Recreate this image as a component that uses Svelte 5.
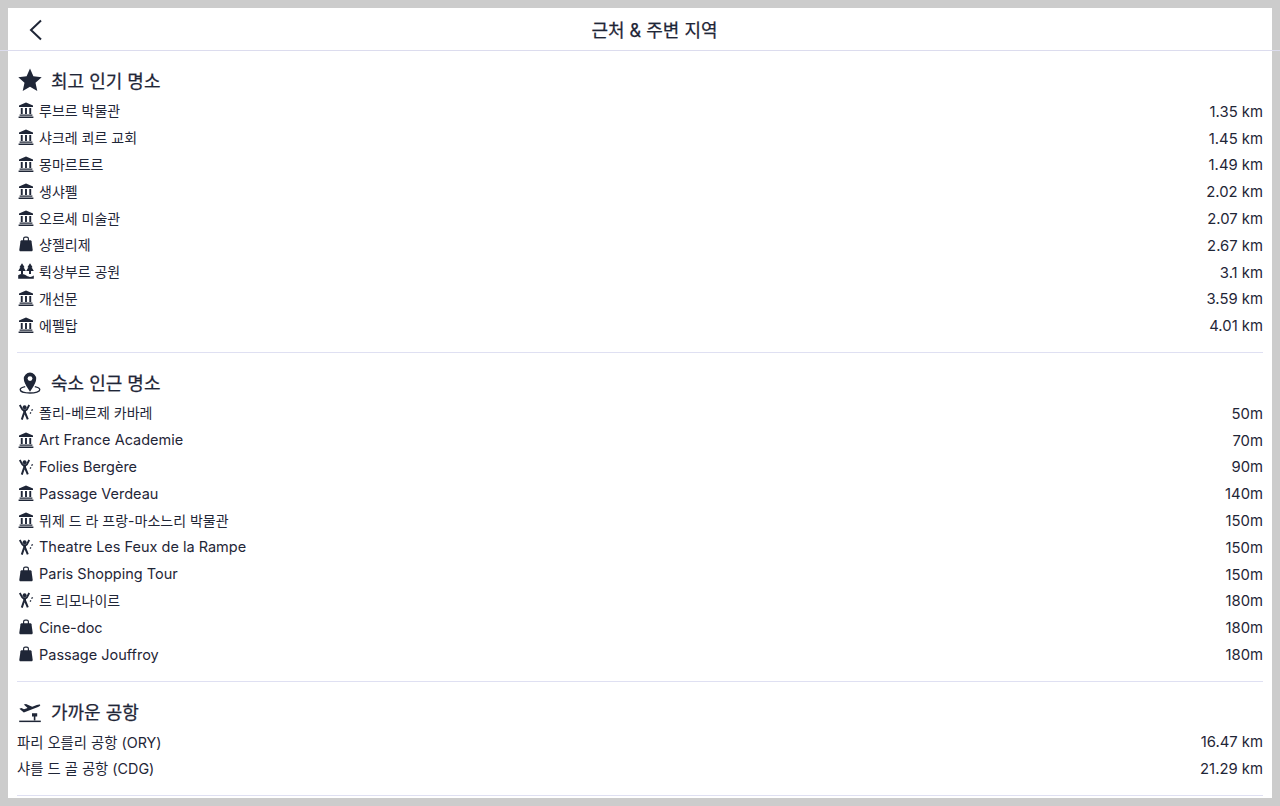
<script>
  const sections = [
    {
      title: "최고 인기 명소",
      icon: "star",
      rows: [
        ["museum", "루브르 박물관", "1.35 km"],
        ["museum", "샤크레 쾨르 교회", "1.45 km"],
        ["museum", "몽마르트르", "1.49 km"],
        ["museum", "생샤펠", "2.02 km"],
        ["museum", "오르세 미술관", "2.07 km"],
        ["bag", "샹젤리제", "2.67 km"],
        ["park", "뤽상부르 공원", "3.1 km"],
        ["museum", "개선문", "3.59 km"],
        ["museum", "에펠탑", "4.01 km"],
      ],
    },
    {
      title: "숙소 인근 명소",
      icon: "pin",
      rows: [
        ["dance", "폴리-베르제 카바레", "50m"],
        ["museum", "Art France Academie", "70m"],
        ["dance", "Folies Bergère", "90m"],
        ["museum", "Passage Verdeau", "140m"],
        ["museum", "뮈제 드 라 프랑-마소느리 박물관", "150m"],
        ["dance", "Theatre Les Feux de la Rampe", "150m"],
        ["bag", "Paris Shopping Tour", "150m"],
        ["dance", "르 리모나이르", "180m"],
        ["bag", "Cine-doc", "180m"],
        ["bag", "Passage Jouffroy", "180m"],
      ],
    },
    {
      title: "가까운 공항",
      icon: "plane",
      rows: [
        [null, "파리 오를리 공항 (ORY)", "16.47 km"],
        [null, "샤를 드 골 공항 (CDG)", "21.29 km"],
      ],
    },
  ];

  // hangul glyphs run a little narrower than the latin ones in the original
  const isKorean = (text) => /[\uac00-\ud7a3]/.test(text);
  const isMixed = (text) => isKorean(text) && /[A-Z]{3}/.test(text);
</script>

{#snippet icon(name)}
  {#if name === "museum"}
    <svg class="small" viewBox="0 0 16 16" fill="#1f2637">
      <path d="M8 .4 15 3.600V5H1V3.600z" />
      <path d="M2.800 6h1.900v6H2.800zM7.050 6h1.900v6h-1.900zM11.300 6h1.900v6h-1.900z" />
      <path d="M1.600 12.600h12.800v1.200H1.600zM.6 14.500h14.800V16H.6z" />
    </svg>
  {:else if name === "bag"}
    <svg class="small" viewBox="0 0 16 16" fill="#1f2637">
      <path d="M5 5V2.800A2.200 2.200 0 0 1 7.200.6h1.600A2.200 2.200 0 0 1 11 2.800V5H9.800V2.800a1 1 0 0 0-1-1H7.200a1 1 0 0 0-1 1V5z" />
      <path d="M3.600 4.200h8.800c.6 0 1 .4 1.100 1l1.200 8.600c.1.900-.4 1.500-1.200 1.500H2.500c-.8 0-1.300-.6-1.200-1.500l1.200-8.600c.1-.6.500-1 1.100-1z" />
    </svg>
  {:else if name === "park"}
    <svg class="small" viewBox="0 0 16 16" fill="#1f2637">
      <path d="M4 .2 6.600 4.200H5.600L7.800 8H5v3H3V8H.2l2.200-3.800h-1zM12 .2l2.600 4h-1L15.800 8H13v3h-2V8H8.200l2.200-3.800h-1z" />
      <path d="M.2 15.800v-3.600c2.400-1.500 4.700-1.500 6.800-.4 1.800 1 3 2 4.800 2.100 1.500.1 2.900-.4 4-1.300v3.200z" />
    </svg>
  {:else if name === "dance"}
    <svg class="small" viewBox="0 0 16 16" fill="none" stroke="#1f2637">
      <circle cx="6.600" cy="3.200" r="2" fill="#1f2637" stroke="none" />
      <path stroke-width="1.900" d="M1.800 1 4.400 5.600c.3.500.7.700 1.200.7h2c.5 0 .9-.2 1.200-.7l2.400-4.600" />
      <path stroke-width="2.800" d="M6.600 6.400v3" />
      <path stroke-width="2" d="M6 9 3.800 15.600M7.200 9l2.600 6.400" />
      <path stroke-width="1.300" d="M14.800 5.400l-1.400 1.100M12.900 8.300l-.8 1.300" />
    </svg>
  {:else if name === "star"}
    <svg class="big" viewBox="0 0 24 24" fill="#1f2637">
      <path d="M12 .6l3.400 7.700 8.300.9-6.200 5.600 1.800 8.200L12 18.800 4.700 23l1.800-8.200L.3 9.200l8.300-.9z" />
    </svg>
  {:else if name === "pin"}
    <svg class="big" viewBox="0 0 24 24" fill="none" stroke="#1f2637">
      <path stroke-width="1.600" d="M12 20.200C9.200 16 6.600 12.800 6.600 8.800a5.400 5.400 0 0 1 10.800 0c0 4-2.600 7.200-5.400 11.400z" fill="#1f2637" />
      <circle cx="12" cy="8.600" r="2.400" fill="#fff" stroke="none" />
      <path stroke-width="1.300" d="M7.200 16.600C4 17.200 2.200 18.400 2.200 19.800c0 1.800 4.400 3.200 9.800 3.200s9.800-1.400 9.800-3.200c0-1.400-1.800-2.600-5-3.200" />
    </svg>
  {:else if name === "plane"}
    <svg class="big" viewBox="0 0 24 24" fill="#1f2637">
      <path d="M1.400 9.800 3.400 9l2.600 1.300 3.600-1.300-3.800-3.400 2.200-.7 6.200 2.900 4.600-1.700c1.500-.6 3-.8 3.400-.2.300.6-.8 1.500-2.200 2.100L5.800 13.400z" />
      <path d="M14 14.200h5.200v3.400h-1.800v4h-1.600v-4H14z" />
      <path d="M1.200 21.600h21.600v1.500H1.200z" />
    </svg>
  {/if}
{/snippet}

<div class="screen">
  <main class="panel">
    <header>
      <svg class="back" viewBox="0 0 14 22" fill="none" stroke="#1f2637" stroke-width="2">
        <path d="M12 1.500 2 11l10 9.500" />
      </svg>
      <h1>근처 &amp; 주변 지역</h1>
    </header>

    {#each sections as section}
      <section>
        <h2>
          {@render icon(section.icon)}
          {section.title}
        </h2>
        {#each section.rows as row}
          <div class="row">
            <span class="name" class:ko={isKorean(row[1])} class:mixed={isMixed(row[1])}>
              {#if row[0]}{@render icon(row[0])}{/if}
              {row[1]}
            </span>
            <span class="dist">{row[2]}</span>
          </div>
        {/each}
      </section>
    {/each}
  </main>
</div>

<style>
  :global(body) {
    margin: 0;
    background: #cccccc;
  }
  .screen {
    height: 806px;
    padding: 8px;
    box-sizing: border-box;
    overflow: hidden;
  }
  .panel {
    height: 790px;
    background: #fff;
    color: #1f2637;
    font-family: Inter, "Noto Sans CJK KR", sans-serif;
  }
  header {
    position: relative;
    height: 42px;
    margin: 0 -8px;
    padding-left: 29px;
    display: flex;
    align-items: center;
    justify-content: center;
    border-bottom: 1px solid #dcdcee;
  }
  .back {
    position: absolute;
    left: 29px;
    top: 11px;
    width: 14px;
    height: 22px;
  }
  h1 {
    margin: 0;
    padding-bottom: 1px;
    font-size: 18px;
    font-weight: 400;
    -webkit-text-stroke: 0.25px #1f2637;
  }
  section {
    margin: 0 9px;
    padding: 14px 0 13.2px;
    border-bottom: 1px solid #dfe0f2;
  }
  h2 {
    margin: 0 0 2.6px;
    height: 30px;
    display: flex;
    align-items: center;
    gap: 9px;
    font-size: 18px;
    font-weight: 400;
    -webkit-text-stroke: 0.25px #1f2637;
  }
  .row {
    height: 26.8px;
    display: flex;
    align-items: center;
    justify-content: space-between;
    font-size: 14.5px;
  }
  .name {
    display: flex;
    align-items: center;
    gap: 5px;
  }
  .name.ko {
    font-size: 14px;
    padding-bottom: 1px;
  }
  .name.mixed {
    font-size: 14.35px;
  }
  .dist {
    padding-top: 1.6px;
    font-size: 14.85px;
  }
  .small {
    width: 16px;
    height: 16px;
    margin-left: 1px;
  }
  .big {
    width: 24px;
    height: 24px;
    margin-left: 1px;
  }
</style>
